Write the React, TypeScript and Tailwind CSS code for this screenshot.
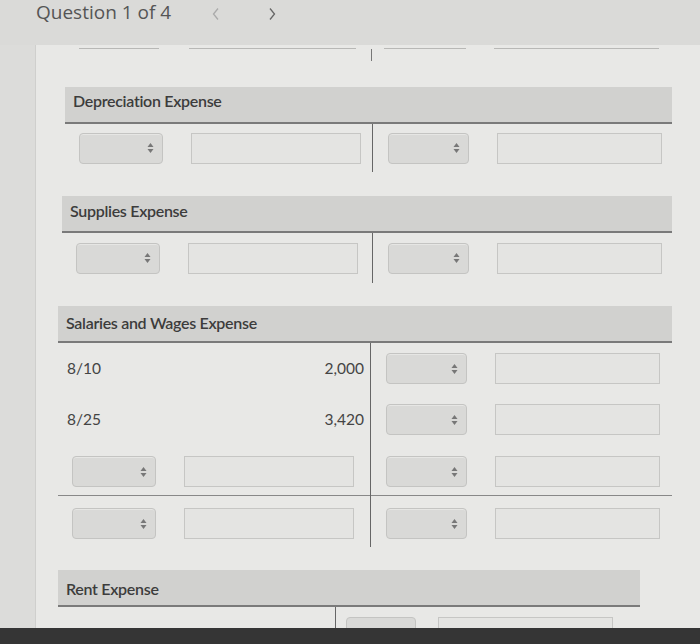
import React from "react";

function Select({ w = "w-[84px]" }: { w?: string }) {
  return (
    <div
      className={`flex h-[31px] ${w} items-center justify-end rounded-[4px] border border-[#c4c4c2] bg-[#d9d9d7] pr-[8px] shadow-[inset_0_1px_0_#e6e6e4]`}
    >
      <svg width="7" height="12" viewBox="0 0 7 12">
        <path d="M3.5 1 L6.5 5 L0.5 5 Z" fill="#777" />
        <path d="M3.5 11 L6.5 7 L0.5 7 Z" fill="#777" />
      </svg>
    </div>
  );
}

function Input({ w }: { w: string }) {
  return <div className={`h-[31px] ${w} border border-[#c6c6c4] bg-[#e4e4e2]`} />;
}

function EntryRow() {
  return (
    <div className="flex h-[31px] items-center">
      <div className="ml-[14px]">
        <Select />
      </div>
      <div className="ml-[28px]">
        <Input w="w-[170px]" />
      </div>
    </div>
  );
}

function RightRow() {
  return (
    <div className="flex h-[31px] items-center">
      <div className="ml-[15px]">
        <Select w="w-[81px]" />
      </div>
      <div className="ml-[28px]">
        <Input w="w-[165px]" />
      </div>
    </div>
  );
}

function Header({ title, pt }: { title: string; pt: string }) {
  return (
    <div
      className={`flex h-[37px] items-start border-b-2 border-[#7a7a7a] bg-[#d1d1cf] pl-[8px] ${pt} text-[16px] font-semibold tracking-[-0.3px] text-[#3c3c3c]`}
    >
      {title}
    </div>
  );
}

export default function App() {
  return (
    <div
      className="h-[644px] w-[700px] overflow-hidden bg-[#e6e6e4]"
      style={{ fontFamily: "Lato, 'Open Sans', sans-serif" }}
    >
      <div className="flex h-[628px] flex-col overflow-hidden">
        {/* top bar */}
        <div className="flex h-[45px] shrink-0 items-start bg-[#dadad8] shadow-[0_1px_2px_rgba(0,0,0,0.15)]">
          <span
            className="ml-[36px] mt-[-2px] text-[19px] text-[#555]"
            style={{ fontFamily: "'Open Sans', sans-serif" }}
          >
            Question 1 of 4
          </span>
          <svg className="ml-[40px] mt-[7px]" width="10" height="14" viewBox="0 0 10 14">
            <path d="M7 1.5 L2.5 7 L7 12.5" stroke="#aaa" strokeWidth="1.3" fill="none" />
          </svg>
          <svg className="ml-[46px] mt-[7px]" width="10" height="14" viewBox="0 0 10 14">
            <path d="M3 1.5 L7.5 7 L3 12.5" stroke="#666" strokeWidth="1.3" fill="none" />
          </svg>
        </div>

        <div className="flex flex-1">
          {/* left strip */}
          <div className="w-[36px] shrink-0 border-r border-[#cfcfcd] bg-[#dcdcda]" />

          <div className="flex-1 bg-[#e8e8e6]">
            {/* remnants of previous table */}
            <div className="relative h-[42px]">
              <div className="flex pt-[3px]">
                <div className="ml-[43px] h-[1px] w-[80px] bg-[#b8b8b6]" />
                <div className="ml-[30px] h-[1px] w-[167px] bg-[#b8b8b6]" />
                <div className="ml-[28px] h-[1px] w-[82px] bg-[#b8b8b6]" />
                <div className="ml-[28px] h-[1px] w-[165px] bg-[#b8b8b6]" />
              </div>
              <div className="absolute left-[335px] top-[4px] h-[12px] w-[1px] bg-[#777]" />
            </div>

            {/* Depreciation */}
            <div className="ml-[29px] w-[607px]">
              <Header title="Depreciation Expense" pt="pt-[2px]" />
              <div className="flex">
                <div className="flex h-[48px] w-[307px] items-center">
                  <EntryRow />
                </div>
                <div className="flex h-[48px] flex-1 items-center border-l border-[#666]">
                  <RightRow />
                </div>
              </div>
            </div>

            {/* Supplies */}
            <div className="ml-[26px] mt-[24px] w-[610px]">
              <Header title="Supplies Expense" pt="pt-[3px]" />
              <div className="flex">
                <div className="flex h-[50px] w-[310px] items-center">
                  <EntryRow />
                </div>
                <div className="flex h-[50px] flex-1 items-center border-l border-[#666]">
                  <RightRow />
                </div>
              </div>
            </div>

            {/* Salaries */}
            <div className="ml-[22px] mt-[23px] w-[614px]">
              <Header title="Salaries and Wages Expense" pt="pt-[5px]" />
              <div className="flex">
                <div className="w-[312px] pt-[10px] text-[15.5px] text-[#444]">
                  <div className="flex h-[31px] items-center justify-between pl-[9px] pr-[6px]">
                    <span>8/10</span>
                    <span>2,000</span>
                  </div>
                  <div className="mt-[20px] flex h-[31px] items-center justify-between pl-[9px] pr-[6px]">
                    <span>8/25</span>
                    <span>3,420</span>
                  </div>
                  <div className="mt-[21px]">
                    <EntryRow />
                  </div>
                  <div className="mt-[8px] border-b border-[#888]" />
                  <div className="pt-[12px]">
                    <EntryRow />
                  </div>
                  <div className="h-[8px]" />
                </div>
                <div className="flex-1 border-l border-[#666] pt-[10px]">
                  <RightRow />
                  <div className="mt-[20px]">
                    <RightRow />
                  </div>
                  <div className="mt-[21px]">
                    <RightRow />
                  </div>
                  <div className="mt-[8px] border-b border-[#888]" />
                  <div className="pt-[12px]">
                    <RightRow />
                  </div>
                  <div className="h-[8px]" />
                </div>
              </div>
            </div>

            {/* Rent */}
            <div className="ml-[22px] mt-[23px] w-[582px]">
              <Header title="Rent Expense" pt="pt-[7px]" />
              <div className="flex">
                <div className="h-[40px] w-[277px]" />
                <div className="flex h-[40px] flex-1 items-start border-l border-[#666] pt-[10px]">
                  <div className="ml-[10px] h-[31px] w-[70px] rounded-[4px] border border-[#c4c4c2] bg-[#d9d9d7]" />
                  <div className="ml-[22px] h-[31px] w-[175px] border border-[#c6c6c4] bg-[#e4e4e2]" />
                </div>
              </div>
            </div>
          </div>
        </div>
      </div>
      <div className="h-[16px] bg-[#353535]" />
    </div>
  );
}
